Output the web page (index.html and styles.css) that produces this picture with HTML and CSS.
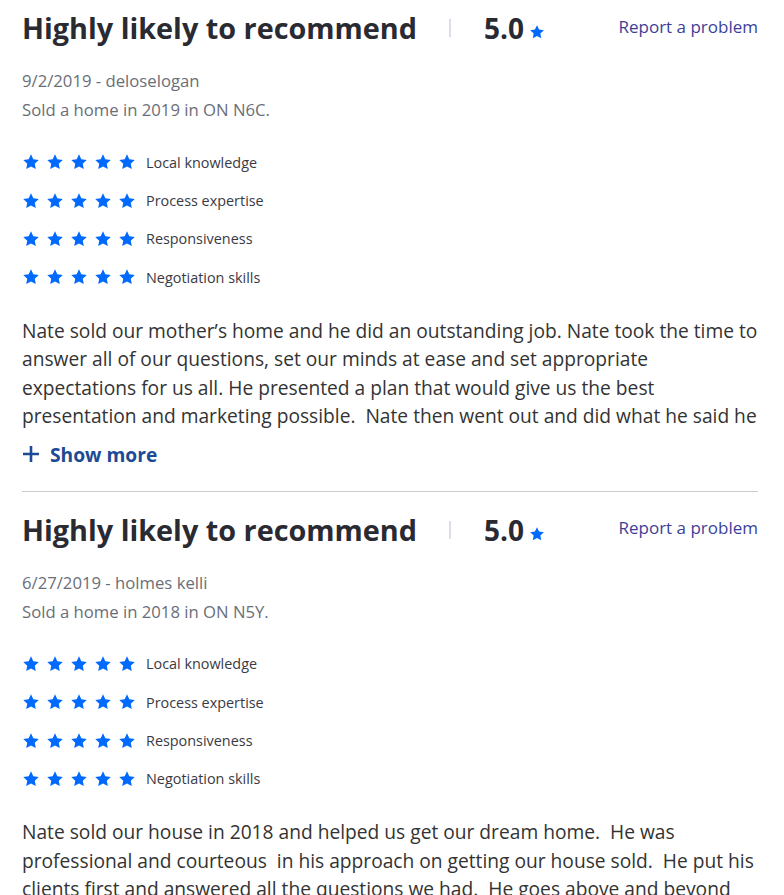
FILE: index.html
```html
<!DOCTYPE html>
<html lang="en">
<head>
  <meta charset="UTF-8">
  <title>Reviews</title>
  <link rel="stylesheet" href="styles.css">
</head>
<body>
<div class="reviews">
    <!-- review 1 -->
    <div class="review">
        <div class="review-head">
            <h2>Highly likely to recommend</h2>
            <span class="sep"></span>
            <span class="score">5.0</span>
            <svg class="star-sm" viewBox="0 0 24 24"><path d="M12 1.8l3.1 6.6 7.2.9-5.3 5 1.4 7.1L12 17.9l-6.4 3.5 1.4-7.1-5.3-5 7.2-.9z"/></svg>
            <a class="report" href="#">Report a problem</a>
        </div>
        <p class="meta">9/2/2019 - deloselogan</p>
        <p class="meta">Sold a home in 2019 in ON N6C.</p>
        <ul class="ratings">
            <li><span class="stars"></span>Local knowledge</li>
            <li><span class="stars"></span>Process expertise</li>
            <li><span class="stars"></span>Responsiveness</li>
            <li><span class="stars"></span>Negotiation skills</li>
        </ul>
        <p class="text">Nate sold our mother’s home and he did an outstanding job. Nate took the time to answer all of our questions, set our minds at ease and set appropriate expectations for us all. He presented a plan that would give us the best presentation and marketing possible.&nbsp; Nate then went out and did what he said he would do and more. The home sold quickly and for a great price.</p>
        <a class="more" href="#"><svg class="plus" viewBox="0 0 18 18"><path d="M9 1v16M1 9h16"/></svg>Show more</a>
    </div>
    <!-- review 2 -->
    <div class="review">
        <div class="review-head">
            <h2>Highly likely to recommend</h2>
            <span class="sep"></span>
            <span class="score">5.0</span>
            <svg class="star-sm" viewBox="0 0 24 24"><path d="M12 1.8l3.1 6.6 7.2.9-5.3 5 1.4 7.1L12 17.9l-6.4 3.5 1.4-7.1-5.3-5 7.2-.9z"/></svg>
            <a class="report" href="#">Report a problem</a>
        </div>
        <p class="meta">6/27/2019 - holmes kelli</p>
        <p class="meta">Sold a home in 2018 in ON N5Y.</p>
        <ul class="ratings">
            <li><span class="stars"></span>Local knowledge</li>
            <li><span class="stars"></span>Process expertise</li>
            <li><span class="stars"></span>Responsiveness</li>
            <li><span class="stars"></span>Negotiation skills</li>
        </ul>
        <p class="text">Nate sold our house in 2018 and helped us get our dream home.&nbsp; He was professional and courteous&nbsp; in his approach on getting our house sold.&nbsp; He put his clients first and answered all the questions we had.&nbsp; He goes above and beyond for his clients and we would recommend him to anyone.</p>
        <a class="more" href="#"><svg class="plus" viewBox="0 0 18 18"><path d="M9 1v16M1 9h16"/></svg>Show more</a>
    </div>
</div>

<script>
    // five stars in front of every rating
    var star = '<svg viewBox="0 0 24 24"><path d="M12 1.8l3.1 6.6 7.2.9-5.3 5 1.4 7.1L12 17.9l-6.4 3.5 1.4-7.1-5.3-5 7.2-.9z"/></svg>';
    var rows = document.querySelectorAll(".stars");
    for (var i = 0; i < rows.length; i++) {
      rows[i].innerHTML = star + star + star + star + star;
    }
</script>
</body>
</html>
```
FILE: styles.css
```css
body {
  margin: 0;
  padding: 0;
  background-color: #FFF;
  font-family: "Open Sans", "Liberation Sans", sans-serif;
  color: #333;
}

.reviews {
  padding: 0 26px 0 22px;
}

.review {
  padding-top: 9px;
  border-bottom: 1px solid #CCC;
}

.review + .review {
  padding-top: 19px;
}

.review-head {
  display: flex;
  align-items: center;
}

.review-head h2 {
  margin: 0;
  font-size: 28.8px;
  line-height: 38px;
  color: #2A2A33;
}

.sep {
  width: 2px;
  height: 18px;
  margin: 0 33px 0 32px;
  background-color: #DDE;
}

.score {
  font-size: 28px;
  font-weight: bold;
  color: #2A2A33;
}

.star-sm {
  width: 16px;
  height: 16px;
  margin: 8px 0 0 5px;
  fill: #006AFF;
}

.report {
  margin-left: auto;
  margin-bottom: 4px;
  font-size: 17px;
  color: #3B3F99;
  text-decoration: none;
}

.meta {
  margin: 0;
  font-size: 16.7px;
  line-height: 29px;
  color: #6A6E78;
}

.review-head + .meta {
  margin-top: 19px;
}

.ratings {
  list-style: none;
  margin: 19px 0 0;
  padding: 0;
}

.ratings li {
  display: flex;
  align-items: center;
  height: 38.4px;
  font-size: 14.4px;
  color: #3A3A44;
}

.stars {
  display: flex;
  gap: 6px;
  margin-right: 10px;
}

.stars svg {
  width: 18px;
  height: 18px;
  fill: #006AFF;
}

.text {
  margin: 20px 0 0;
  max-height: 114px;
  overflow: hidden;
  font-size: 19.2px;
  line-height: 28.5px;
  color: #333;
}

.more {
  display: inline-flex;
  align-items: center;
  margin: 10px 0 23px;
  font-size: 19.2px;
  font-weight: bold;
  color: #1D4A96;
  text-decoration: none;
}

.plus {
  width: 18px;
  height: 18px;
  margin-right: 10px;
  stroke: #1D4A96;
  stroke-width: 2.6;
}
```
